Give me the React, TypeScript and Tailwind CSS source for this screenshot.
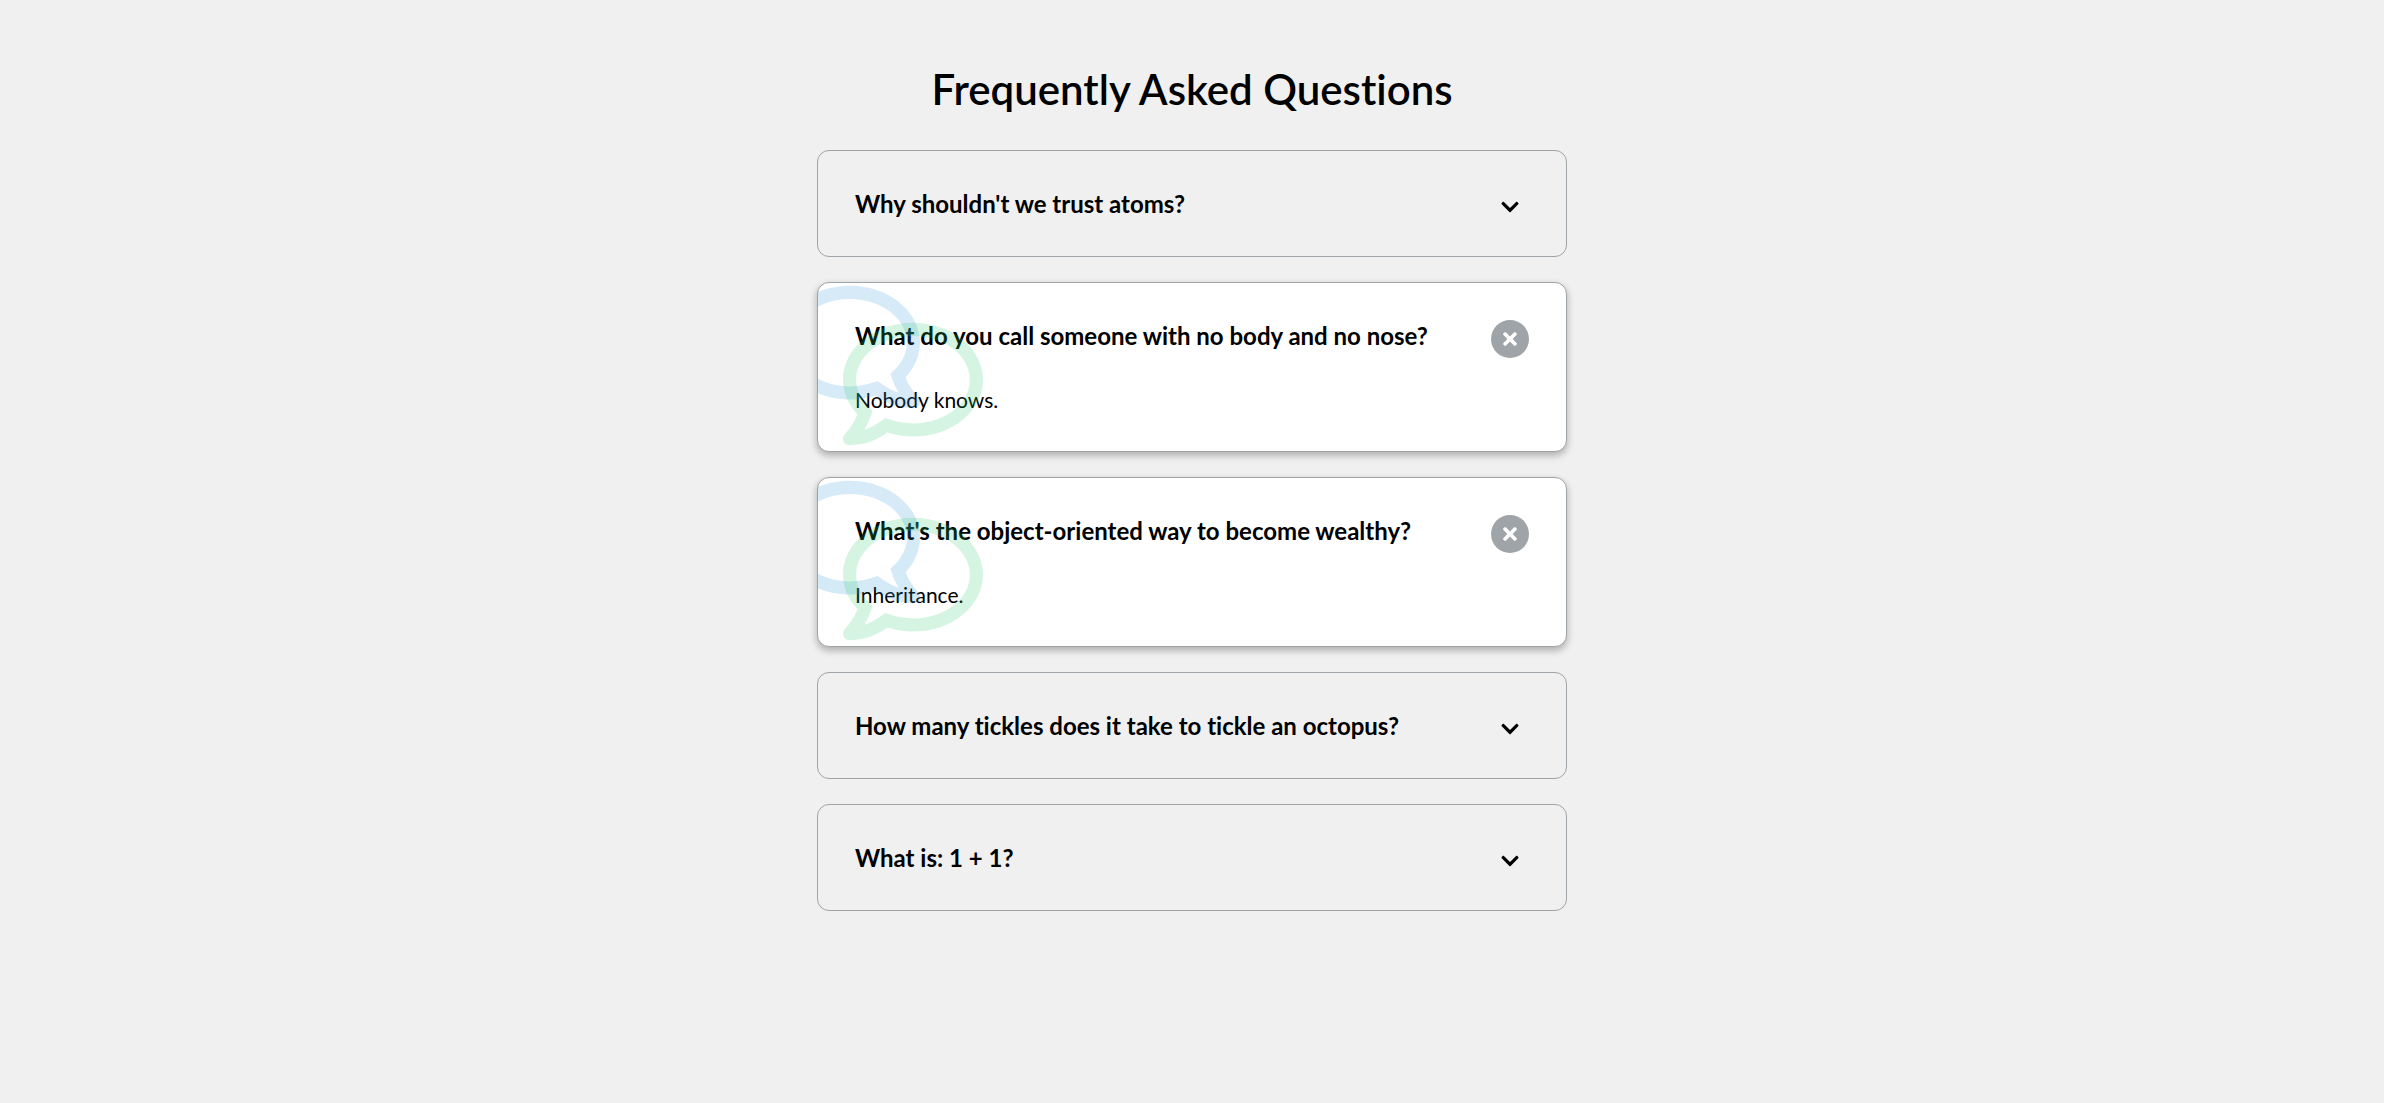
import { useId, useState } from "react";
import { FaChevronDown, FaRegComment, FaTimes } from "react-icons/fa";

type Faq = { question: string; answer: string; open?: boolean };

const faqs: Faq[] = [
  {
    question: "Why shouldn't we trust atoms?",
    answer: "They make up everything.",
  },
  {
    question: "What do you call someone with no body and no nose?",
    answer: "Nobody knows.",
    open: true,
  },
  {
    question: "What's the object-oriented way to become wealthy?",
    answer: "Inheritance.",
    open: true,
  },
  {
    question: "How many tickles does it take to tickle an octopus?",
    answer: "Ten-tickles!",
  },
  { question: "What is: 1 + 1?", answer: "Depends on who you ask." },
];

function FaqCard({ question, answer, open: initiallyOpen = false }: Faq) {
  const [open, setOpen] = useState(initiallyOpen);
  const id = useId();

  return (
    <section
      className={
        open
          ? "relative overflow-hidden rounded-xl border border-[#9fa4a8] bg-white p-[37px] shadow-[0_4px_8px_rgba(0,0,0,0.1),0_3px_7px_rgba(0,0,0,0.2)]"
          : "relative overflow-hidden rounded-xl border border-[#9fa4a8] p-[37px]"
      }
    >
      <div className="flex items-start justify-between gap-4">
        <h3 id={id} className="text-2xl leading-[31px] font-bold">
          {question}
        </h3>
        <button
          type="button"
          aria-expanded={open}
          aria-labelledby={id}
          onClick={() => setOpen(!open)}
          className={
            open
              ? "-mb-[7px] flex size-[38px] shrink-0 items-center justify-center rounded-full bg-[#9fa4a8] text-xl text-white"
              : "-mb-[7px] flex size-[38px] shrink-0 items-center justify-center rounded-full text-xl"
          }
        >
          {open ? <FaTimes /> : <FaChevronDown />}
        </button>
      </div>
      {open && <p className="mt-[35px] text-[21px] leading-7">{answer}</p>}
      {open && (
        <div aria-hidden="true" className="pointer-events-none">
          <FaRegComment className="absolute -top-1.5 -left-[38px] size-[140px] -scale-x-100 text-[#3498db] opacity-20" />
          <FaRegComment className="absolute top-[31px] left-[25px] size-[140px] text-[#2ecc71] opacity-20" />
        </div>
      )}
    </section>
  );
}

export default function App() {
  return (
    <main className="min-h-screen bg-[#f0f0f0] px-4 pt-16 pb-16 font-['Lato',sans-serif] text-black [font-variant-ligatures:none]">
      <h1 className="text-center text-[42px] leading-[50px] font-semibold">
        Frequently Asked Questions
      </h1>
      <div className="mx-auto mt-9 flex max-w-[750px] flex-col gap-[25px]">
        {faqs.map((faq) => (
          <FaqCard key={faq.question} {...faq} />
        ))}
      </div>
    </main>
  );
}
